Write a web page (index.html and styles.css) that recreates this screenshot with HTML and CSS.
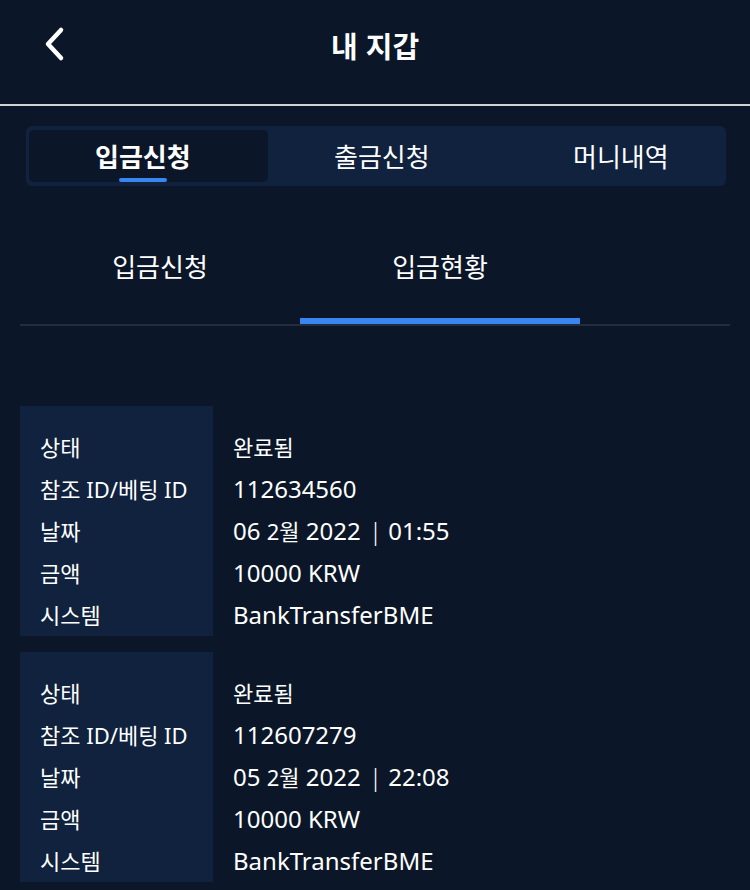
FILE: index.html
```html
<!DOCTYPE html>
<html lang="ko">
<head>
    <meta charset="UTF-8">
    <meta name="viewport" content="width=device-width, initial-scale=1.0">
    <title>내 지갑</title>
    <link rel="stylesheet" href="styles.css">
</head>
<body>
    <div class="header">
        <a class="back-btn" href="#">
            <svg width="26" height="36" viewBox="0 0 26 36">
                <path d="M19 4 L6 18 L19 32" fill="none" stroke="#fff" stroke-width="4.5" stroke-linecap="round" stroke-linejoin="round"/>
            </svg>
        </a>
        <h1>내 지갑</h1>
    </div>

    <div class="main-tabs">
        <div class="main-tab active"><span>입금신청</span></div>
        <div class="main-tab"><span>출금신청</span></div>
        <div class="main-tab"><span>머니내역</span></div>
    </div>

    <div class="sub-tabs">
        <div class="sub-tab">입금신청</div>
        <div class="sub-tab active">입금현황</div>
    </div>

    <div class="record-list">
        <div class="record">
            <div class="labels">
                <p>상태</p>
                <p>참조 ID/베팅 ID</p>
                <p>날짜</p>
                <p>금액</p>
                <p>시스템</p>
            </div>
            <div class="values">
                <p><span class="ko">완료됨</span></p>
                <p>112634560</p>
                <p>06 <span class="ko">2월</span> 2022 <span class="sep">|</span> 01:55</p>
                <p>10000 KRW</p>
                <p>BankTransferBME</p>
            </div>
        </div>
        <div class="record">
            <div class="labels">
                <p>상태</p>
                <p>참조 ID/베팅 ID</p>
                <p>날짜</p>
                <p>금액</p>
                <p>시스템</p>
            </div>
            <div class="values">
                <p><span class="ko">완료됨</span></p>
                <p>112607279</p>
                <p>05 <span class="ko">2월</span> 2022 <span class="sep">|</span> 22:08</p>
                <p>10000 KRW</p>
                <p>BankTransferBME</p>
            </div>
        </div>
    </div>
</body>
</html>
```

FILE: styles.css
```css
body {
    margin: 0;
    padding: 0;
    font-family: "Noto Sans", "Noto Sans CJK KR", sans-serif;
    background-color: #0b1729;
    color: #ffffff;
    width: 750px;
    height: 890px;
    overflow: hidden;
}

.header {
    position: relative;
    height: 104px;
    border-bottom: 2px solid #d2d2d2;
    display: flex;
    align-items: center;
    justify-content: center;
}

.header h1 {
    margin: 0 0 14px 0;
    font-size: 29px;
    font-weight: bold;
    font-family: "Noto Sans CJK KR", sans-serif;
}

.back-btn {
    position: absolute;
    left: 42px;
    top: 26px;
    display: block;
}

.main-tabs {
    display: flex;
    margin: 20px 24px 0 26px;
    padding: 4px 3px;
    height: 52px;
    background-color: #10223d;
    border-radius: 6px;
    overflow: hidden;
}

.main-tab {
    width: 239px;
    flex-shrink: 0;
    box-sizing: border-box;
    padding-left: 66px;
    display: flex;
    align-items: center;
    font-family: "Noto Sans CJK KR", sans-serif;
    font-size: 26px;
    border-radius: 5px;
}

.main-tab span {
    position: relative;
    display: block;
    line-height: 52px;
}

.main-tab.active {
    background-color: #0b1729;
    font-weight: bold;
}

.main-tab.active span::after {
    content: "";
    position: absolute;
    bottom: 0;
    left: 50%;
    width: 48px;
    margin-left: -24px;
    height: 4px;
    border-radius: 2px;
    background-color: #3a86f0;
}

.sub-tabs {
    display: flex;
    margin: 20px 20px 0 20px;
    border-bottom: 2px solid #212d3e;
}

.sub-tab {
    width: 280px;
    height: 118px;
    display: flex;
    align-items: center;
    justify-content: center;
    font-family: "Noto Sans CJK KR", sans-serif;
    font-size: 26px;
    box-sizing: border-box;
    border-bottom: 6px solid transparent;
    padding-top: 6px;
}

.sub-tab.active {
    border-bottom-color: #3a86f0;
}

.record-list {
    margin: 80px 20px 0 20px;
    display: flex;
    flex-direction: column;
    gap: 16px;
}

.record {
    display: flex;
    font-size: 22px;
}

.record p {
    margin: 0;
    height: 42px;
    line-height: 42px;
    white-space: nowrap;
}

.labels {
    width: 193px;
    box-sizing: border-box;
    padding: 20px 0 0 20px;
    background-color: #10223d;
}

.values {
    padding: 20px 0 0 20px;
    font-size: 24px;
}

.values .ko {
    font-size: 22px;
}

.sep {
    margin: 0 0 0 2px;
    font-weight: 300;
}
```
